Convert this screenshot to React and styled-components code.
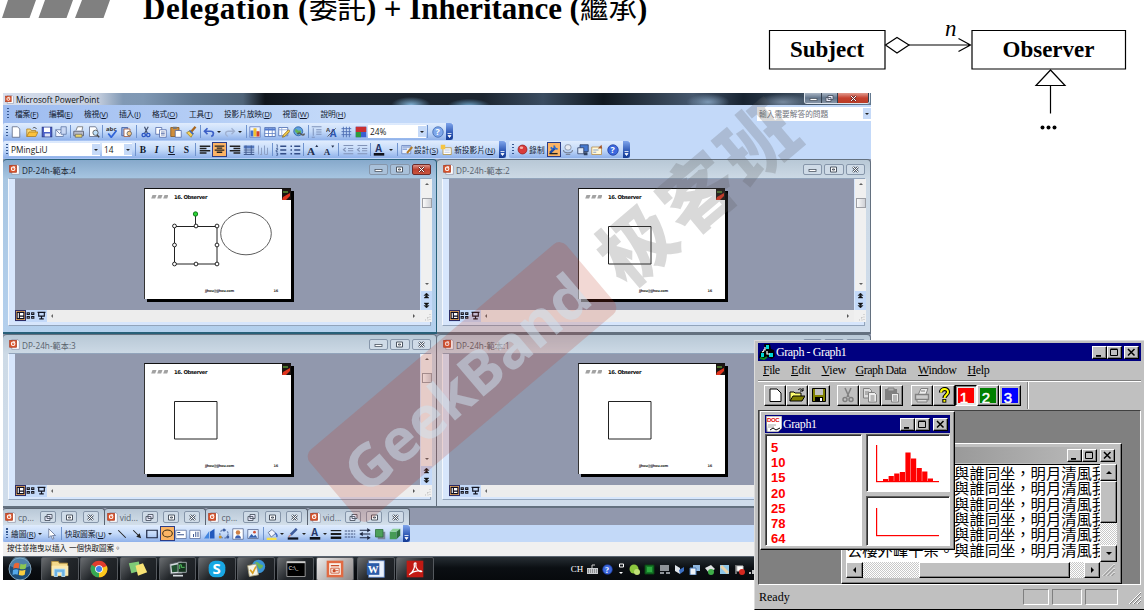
import React from "react";
import styled, { createGlobalStyle, css } from "styled-components";

const Global = createGlobalStyle`
  * { box-sizing: border-box; }
  body { margin: 0; background: #fff; }
`;

const uiFont = `"Open Sans", "Noto Sans CJK TC", sans-serif`;
const serif = `"Liberation Serif", "Noto Sans CJK TC", serif`;

/* ---------- slide ---------- */
const Page = styled.main`
  position: relative;
  width: 1144px;
  height: 616px;
  overflow: hidden;
  background: #fff;
  font-family: ${uiFont};
`;
const SlideHeader = styled.header`
  display: flex;
  align-items: flex-start;
  gap: 33px;
  height: 40px;
`;
const Title = styled.h1`
  margin: -10px 0 0;
  font: 700 31px/38px ${serif};
  letter-spacing: 0.55px;
  white-space: nowrap;
  color: #000;
`;
const Tight = styled.span`
  letter-spacing: -0.05px;
`;
const Han = styled.span`
  font-weight: 400;
  font-size: 28.5px;
  letter-spacing: 0;
`;
const Diagram = styled.svg`
  position: absolute;
  left: 760px;
  top: 10px;
`;

/* ---------- icons, 16 x 16 grid ---------- */
const glyphs = {
  ppt: <><path d="M4 1h9l2 2v12H4z" fill="#fff" stroke="#8a8fa5" /><rect x="1" y="2" width="10" height="10" fill="#d9542b" stroke="#a9351a" /><circle cx="6" cy="7" r="2.6" fill="none" stroke="#fff" strokeWidth="1.5" /><path d="M6 7V4h3" stroke="#fff" fill="none" /></>,
  page: <path d="M3 1h7l3 3v11H3z" fill="#fff" stroke="#55607c" />,
  folder: <><path d="M1 14V4h5l1 2h6v3" fill="#f9d978" stroke="#a8781b" /><path d="M1 14l3-6h12l-3 6z" fill="#fbc23b" stroke="#a8781b" /><path d="M9 3c2-2 4-1 5 1" stroke="#333" fill="none" /></>,
  save: <><rect x="1.5" y="1.5" width="13" height="13" fill="#4a5fc7" stroke="#26357f" /><rect x="4" y="2" width="8" height="6" fill="#fff" /><rect x="5" y="10" width="7" height="4" fill="#dfe5f5" /></>,
  mail: <><path d="M1 5h10v9H1z" fill="#f4f7ff" stroke="#59709f" /><path d="M1 5l5 5 5-5" stroke="#59709f" fill="none" /><path d="M8 1h7v10H8z" fill="#c9d8f5" stroke="#59709f" /></>,
  print: <><path d="M4 6l2-5h7l-1 5" fill="#fff" stroke="#666" /><path d="M1 7h13v6H1z" fill="#b8bccb" stroke="#4f5362" /><path d="M3 11h9v4H3z" fill="#e9d66b" stroke="#666" /></>,
  preview: <><path d="M2 1h8l2 3v10H2z" fill="#fff" stroke="#55607c" /><circle cx="10" cy="9" r="3.5" fill="#bfe0fa" stroke="#444" /><path d="M12 12l3 3" stroke="#444" strokeWidth="2" /></>,
  spell: <><text x="0" y="7" fontSize="8" fontWeight="700" fill="#333">abc</text><path d="M3 10l4 5 7-9" fill="none" stroke="#3064d8" strokeWidth="2.4" /></>,
  research: <><path d="M1 2h8v11H1z" fill="#8fb0e8" stroke="#3a569b" /><path d="M4 4h8v10H4z" fill="#fff" stroke="#a0522d" /><circle cx="11" cy="10" r="3" fill="#f4c886" stroke="#555" /></>,
  cut: <><path d="M6 1l4 9M11 1L6 10" stroke="#42506f" strokeWidth="1.6" fill="none" /><circle cx="5" cy="12" r="2.3" fill="none" stroke="#2d57c4" strokeWidth="1.7" /><circle cx="11" cy="12" r="2.3" fill="none" stroke="#2d57c4" strokeWidth="1.7" /></>,
  copy: <><path d="M1 2h8v9H1z" fill="#fff" stroke="#4a63a4" /><path d="M6 5h9v10H6z" fill="#fff" stroke="#4a63a4" /><path d="M8 8h5M8 10h5M8 12h5" stroke="#4a63a4" /></>,
  paste: <><path d="M1 2h11v12H1z" fill="#cf8e3c" stroke="#7f5217" /><path d="M4 1h5v3H4z" fill="#777" /><path d="M7 6h8v9H7z" fill="#fff" stroke="#4a63a4" /></>,
  brush: <><path d="M14 1L8 8" stroke="#a8651c" strokeWidth="3" /><path d="M2 9l5-3 4 4-3 5z" fill="#f3d157" stroke="#9b7b21" /><path d="M6 6l5 5" stroke="#3864c6" strokeWidth="2" /></>,
  undo: <path d="M3 7h7c5 0 5 5 1 7M6 3L2 7l4 4" fill="none" stroke="#3b5fc6" strokeWidth="2.3" />,
  redo: <path d="M13 7H6c-5 0-5 5-1 7M10 3l4 4-4 4" fill="none" stroke="#9fb0d0" strokeWidth="1.8" />,
  chart: <><path d="M1 1h14v14H1z" fill="#eef3ff" stroke="#5a76ba" /><path d="M2 6h4v8H2z" fill="#3e6fd3" /><path d="M6 3h4v11H6z" fill="#f0c22f" /><path d="M10 7h4v7h-4z" fill="#d2412c" /></>,
  table: <><path d="M1 2h14v12H1z" fill="#fff" stroke="#3f60aa" /><path d="M1 3h14v3H1z" fill="#4d77cf" /><path d="M1 10h14M6 3v11M11 3v11" stroke="#5b7cc3" /></>,
  insert: <><path d="M1 2h12v11H1z" fill="#fff" stroke="#3f60aa" /><path d="M1 5h12M5 2v11" stroke="#85a0d6" /><path d="M14 5l-7 7-1 3 3-1 7-7z" fill="#f4cd4a" stroke="#866016" /></>,
  globe: <><circle cx="7" cy="7" r="6" fill="#5ea1df" stroke="#295b9d" /><path d="M3 4c3 0 3 3 6 2s2 4-1 5-3-3-5-3z" fill="#64b354" /><path d="M6 11c2-3 4-1 5 0s4 2 4-1" stroke="#555" strokeWidth="2" fill="none" /></>,
  expand: <><path d="M1 1h13M1 15h4M3 3v10M7 5h7M7 8h7M7 11h7" stroke="#7c91ba" strokeWidth="1.300" fill="none" /></>,
  format: <><text x="0" y="8" fontSize="8" fontWeight="700" fill="#444">A</text><text x="5" y="15" fontSize="13" fontWeight="700" fill="#2f56b0">A</text><path d="M2 14L13 3" stroke="#444" /></>,
  grid: <path d="M2 3.500h13M2 7.500h13M2 11.500h13M4.500 1v14M8.500 1v14M12.500 1v14" stroke="#4f6fb4" strokeWidth="1.200" />,
  colors: <><path d="M1 1h14v14H1z" fill="#3a5fd2" /><path d="M1 1h14v7H1z" fill="#c93030" /><path d="M1 8h7v7H1z" fill="#2d9b3f" /></>,
  help: <><circle cx="8" cy="8" r="7" fill="#3c68dd" stroke="#1e3c9d" /><text x="4.500" y="12.500" fontSize="12" fontWeight="700" fill="#fff">?</text></>,
  helpSoft: <><circle cx="8" cy="8" r="7" fill="#7ea7ea" stroke="#3c66ad" /><text x="4.500" y="12.500" fontSize="12" fontWeight="700" fill="#fff">?</text></>,
  alignL: <path d="M1 3h14M1 6h9M1 9h14M1 12h9" stroke="#222" strokeWidth="1.900" />,
  alignC: <path d="M1 3h14M4 6h8M1 9h14M4 12h8" stroke="#222" strokeWidth="1.900" />,
  alignR: <path d="M1 3h14M6 6h9M1 9h14M6 12h9" stroke="#222" strokeWidth="1.900" />,
  spread: <><path d="M1 2h14v4H1z" fill="#5277be" /><path d="M1 8h14M1 11h14M1 14h14M4 2v12M11 2v12" stroke="#425a8d" strokeWidth="1.300" /></>,
  columns: <path d="M2 2v12M6 5v9M10 2v12M14 5v9M4 14h3M11 14h3" stroke="#8da0c4" strokeWidth="1.400" fill="none" />,
  numbered: <><path d="M7 3h8M7 8h8M7 13h8" stroke="#334d86" strokeWidth="1.700" /><path d="M2 1h1v4M1.500 6h2v2h-2v2h2M1.500 12h2v3h-2" stroke="#334d86" fill="none" /></>,
  bullets: <><path d="M7 3h8M7 8h8M7 13h8" stroke="#334d86" strokeWidth="1.700" /><path d="M2 2h2v2H2zM2 7h2v2H2zM2 12h2v2H2z" fill="#334d86" /></>,
  indent: <path d="M2 2h13M8 6h7M8 9h7M2 13h13M5 5L2 7.500 5 10" stroke="#8294b8" strokeWidth="1.600" fill="none" />,
  fontUp: <><text x="0" y="14" fontSize="15" fontWeight="700" fill="#22304f" fontFamily="Liberation Serif">A</text><path d="M11 4l2-3 2 3z" fill="#22304f" /></>,
  fontDown: <><text x="1" y="14" fontSize="12" fontWeight="700" fill="#22304f" fontFamily="Liberation Serif">A</text><path d="M11 2h4l-2 3z" fill="#22304f" /></>,
  fontColor: <><text x="3" y="11" fontSize="13" fontWeight="700" fill="#26386a">A</text><path d="M1 12h14v3.500H1z" fill="#10131b" /></>,
  design: <><path d="M1 2h12v11H1z" fill="#e9f1ff" stroke="#5b79b8" /><path d="M2 4h10M2 7h6" stroke="#8ea8d9" strokeWidth="2" /><path d="M15 4l-7 8" stroke="#b37b25" strokeWidth="2.600" /></>,
  newSlide: <><path d="M4 5h11v9H4z" fill="#fff" stroke="#b28c33" /><path d="M6 8h7M6 11h7" stroke="#a6b6d8" /><path d="M1 1h6v6H1z" fill="#f6c542" /></>,
  record: <><circle cx="8" cy="8" r="6.500" fill="#d93a3a" stroke="#8d1717" /><ellipse cx="6.500" cy="5.500" rx="2.500" ry="1.800" fill="#f7b0a8" /></>,
  tool: <><path d="M3 13l7-7" stroke="#1f4ea8" strokeWidth="3.600" /><path d="M9 2c0 3 2 5 5 5M4 5l3 3" stroke="#2d6bd0" strokeWidth="2.600" fill="none" /><path d="M2 14h12" stroke="#222" strokeWidth="2" /></>,
  mic: <><rect x="4" y="1" width="8" height="7" rx="3" fill="#e7ebf3" stroke="#79849a" /><path d="M2 8c0 5 12 5 12 0M5 14h6" stroke="#79849a" strokeWidth="1.500" fill="none" /></>,
  monitor: <><path d="M4 1h11v9H4z" fill="#4679d0" stroke="#24365e" /><path d="M1 5h8v8H1z" fill="#dde7f8" stroke="#24365e" /><path d="M9 11h5v4H9z" fill="#30405f" /></>,
  memo: <><path d="M1 4h13v10H1z" fill="#fff8d8" stroke="#b58a40" /><path d="M9 6l5-5 1 5z" fill="#a65a2f" /><path d="M3 8h7M3 11h4" stroke="#6486c6" /></>,
  cursor: <path d="M5 1v12l3-3 2 5 2-1-2-4h4z" fill="#fff" stroke="#5a6a8d" />,
  line: <path d="M3 3l10 10" stroke="#222" strokeWidth="1.400" />,
  arrow: <><path d="M3 3l8 8" stroke="#222" strokeWidth="1.400" /><path d="M13.500 13.500L7 11.500l4.500-4.500z" fill="#222" /></>,
  rect: <path d="M1 3h14v10H1z" fill="none" stroke="#1d2742" strokeWidth="1.600" />,
  oval: <ellipse cx="8" cy="8" rx="7" ry="5" fill="none" stroke="#3a2b10" strokeWidth="1.500" />,
  textbox: <><path d="M1 3h14v11H1z" fill="#fff" stroke="#566b9b" /><path d="M3 6h4M3 9h9" stroke="#3c558f" strokeWidth="1.500" /></>,
  vtext: <><path d="M1 3h14v11H1z" fill="#fff" stroke="#566b9b" /><path d="M12 5v7M9 5v7M6 8v4" stroke="#3c558f" strokeWidth="1.300" /></>,
  wordart: <><path d="M0 14L7 4v10z" fill="#4386e0" /><path d="M8 14V5l6-4v13z" fill="#2258bd" /></>,
  org: <><circle cx="8" cy="8" r="5.500" fill="none" stroke="#7089b8" strokeWidth="1.800" strokeDasharray="3 2" /><circle cx="8" cy="2.500" r="2" fill="#3d5d9f" /><circle cx="3" cy="12" r="2" fill="#c99532" /><circle cx="13" cy="12" r="2" fill="#3d5d9f" /></>,
  clip: <><path d="M1 1h14v14H1z" fill="#fff" stroke="#52638c" /><circle cx="8" cy="6" r="3" fill="#ce8147" /><path d="M4 14c0-6 8-6 8 0z" fill="#3b60b2" /></>,
  picture: <><path d="M1 2h14v12H1z" fill="#e4efff" stroke="#52638c" /><path d="M2 13l4-5 3 3 2-2 3 4z" fill="#335fae" /><circle cx="10" cy="5.500" r="1.800" fill="#d04e35" /></>,
  fill: <><path d="M3 6l5-4 5 5-6 5z" fill="#f1f5ff" stroke="#4d5f87" /><path d="M12 7c3 1 3 4 2 5" stroke="#3d66c0" strokeWidth="2" fill="none" /><path d="M1 13h13v3H1z" fill="#f5e04a" /></>,
  pen: <><path d="M13 1L5 9" stroke="#3e5b9c" strokeWidth="3.400" /><path d="M5 9l-3 3" stroke="#b88" strokeWidth="2" /><path d="M1 12.500h14v3H1z" fill="#0f1320" /></>,
  lines: <><path d="M1 3.500h14" stroke="#111" strokeWidth="1.500" /><path d="M1 8h14" stroke="#111" strokeWidth="2.500" /><path d="M1 13h14" stroke="#111" strokeWidth="3.200" /></>,
  dashes: <path d="M1 4h14M1 8h14M1 12h14" stroke="#43557e" strokeWidth="1.500" strokeDasharray="3 1" />,
  arrows: <><path d="M1 3h14M1 8h14M1 13h14" stroke="#1e2740" strokeWidth="1.600" /><path d="M15 3l-4-3v6zM1 8l4-3v6zM15 13l-4-3v6z" fill="#1e2740" /></>,
  shadow: <><path d="M5 5h10v10H5z" fill="#7a8699" /><path d="M2 2h10v10H2z" fill="#4da05b" stroke="#2a6a38" /></>,
  cube: <><path d="M1 5h9v10H1z" fill="#479b56" /><path d="M1 5l4-4h10l-5 4z" fill="#8cd098" /><path d="M10 5l5-4v9l-5 5z" fill="#2c6f3a" /></>,
  viewNormal: <path d="M2 2.500h12v11H2zM6 2v12M6 9h8" fill="#fff" stroke="#0d0d20" strokeWidth="2" />,
  viewSort: <path d="M2 3h4v3H2zM10 3h4v3h-4zM2 10h4v3H2zM10 10h4v3h-4z" fill="#fff" stroke="#10131f" strokeWidth="1.800" />,
  viewShow: <><path d="M1 2.500h14M3 3v6h10V3M8 9v5M4 14h8" fill="none" stroke="#10131f" strokeWidth="2" /></>,
};
const Svg = styled.svg`
  display: block;
  flex: none;
  width: ${(p) => p.$s}px;
  height: ${(p) => p.$s}px;
`;
const Icon = ({ name, size = 11 }) => (
  <Svg $s={size} viewBox="0 0 16 16">{glyphs[name]}</Svg>
);

/* ---------- PowerPoint window ---------- */
const PptWindow = styled.section`
  position: absolute;
  left: 3px;
  top: 93px;
  width: 868px;
  height: 487px;
  display: flex;
  flex-direction: column;
  overflow: hidden;
  background: #c3d9f8;
`;
const PptTitle = styled.div`
  display: flex;
  align-items: center;
  height: 12px;
  flex: none;
  padding: 0 1px 0 2px;
  gap: 2px;
  font-size: 8.300px;
  color: #111;
  background:
    radial-gradient(ellipse 22px 9px at 408px 12px, #7fb0d4, transparent 90%),
    radial-gradient(ellipse 24px 8px at 466px 13px, #6ea4ca, transparent 90%),
    radial-gradient(ellipse 24px 9px at 705px 9px, #7c98b4, transparent 90%),
    radial-gradient(ellipse 30px 9px at 780px 9px, #76899f, transparent 90%),
    linear-gradient(90deg, #d7dfee 0, #c3cddd 95px, #8199b5 120px, #7f98b4 140px, #5f7791 190px, #4f6378 240px, #0f151c 262px, #1d2630 330px, #1c2530 480px, #3a4c60 540px, #101820 600px, #46586e 690px, #172331 740px, #637990 868px);
`;
const TitleText = styled.span`flex: 1;`;
const Caption = styled.div`
  display: flex;
  align-self: flex-start;
  height: 11px;
  border: 1px solid #dbe3ec;
  border-top: 0;
  border-radius: 0 0 3px 3px;
  overflow: hidden;
`;
const CaptionButton = styled.span`
  width: ${(p) => p.$w}px;
  display: flex;
  align-items: center;
  justify-content: center;
  background: ${(p) => (p.$close ? "linear-gradient(#e19a8e, #c5412f 50%, #b93c26)" : "linear-gradient(#a9b5c4, #62758b 50%, #8795a8)")};
  border-right: 1px solid #333f4e;
`;
const MenuBar = styled.div`
  display: flex;
  align-items: center;
  flex: none;
  height: 18px;
  padding: 0 0 1px 4px;
  font-size: 7.700px;
  color: #10182c;
  background: linear-gradient(90deg, #9ebcf0, #c3d9f9 330px);
`;
const Grip = styled.span`
  flex: none;
  width: 2px;
  height: 12px;
  margin-right: ${(p) => p.$after || 1}px;
  background: repeating-linear-gradient(#35578f 0 1.500px, transparent 1.500px 3px);
`;
const MenuItem = styled.span`
  width: ${(p) => p.$w}px;
  flex: none;
  white-space: nowrap;
  letter-spacing: -0.100px;
`;
const Ask = styled.div`
  margin-left: auto;
  display: flex;
  align-items: center;
  width: 114px;
  height: 14px;
  background: #fff;
  color: #70747c;
  padding-left: 2px;
`;
const Bar = styled.div`
  display: flex;
  flex: none;
  height: ${(p) => p.$h || 18}px;
  gap: 3px;
  background: ${(p) => (p.$plain ? "#c3d9f8" : "linear-gradient(90deg, #9ebcf0, #c3d9f9 330px)")};
`;
const Strip = styled.div`
  display: flex;
  align-items: center;
  height: 17px;
  padding-left: 3px;
  border-radius: 2px 0 0 2px;
  background: linear-gradient(#e0ecfd, #c4daf9 50%, #8fb1ea);
  font-size: 7.700px;
  color: #10182c;
  white-space: nowrap;
`;
const Cell = styled.span`
  display: flex;
  align-items: center;
  justify-content: center;
  flex: none;
  width: ${(p) => p.$w}px;
  height: 15px;
  ${(p) => p.$on && css`background: #fbb465; border: 1px solid #2c3d86;`}
`;
const Rule = styled.span`
  flex: none;
  width: 1px;
  height: 13px;
  margin: 0 ${(p) => (p.$w - 1) / 2}px;
  background: #6f93ce;
`;
const Letter = styled.b`
  font: ${(p) => (p.$italic ? "italic" : "normal")} 700 9.500px/12px "Liberation Serif", serif;
  text-decoration: ${(p) => (p.$under ? "underline" : "none")};
`;
const Field = styled.span`
  display: flex;
  align-items: center;
  justify-content: space-between;
  flex: none;
  width: ${(p) => p.$w}px;
  height: 13px;
  margin-right: ${(p) => p.$after || 0}px;
  padding-left: 2px;
  background: #fff;
  font-size: 8.300px;
  color: #1a1a1a;
`;
const FieldArrow = styled.i`
  display: flex;
  align-items: center;
  justify-content: center;
  width: 8px;
  height: 11px;
  margin-left: auto;
  background: #c6daf8;
`;
const Triangle = styled.i`
  display: block;
  flex: none;
  border: 2px solid transparent;
  ${(p) => ({ down: "border-top-color: #222; margin-top: 2px;", up: "border-bottom-color: #222; margin-bottom: 2px;", left: "border-right-color: #666;", right: "border-left-color: #555; margin-left: auto; margin-right: 3px;" }[p.$to])}
`;
const CapShape = styled.span`
  display: flex;
  align-items: flex-end;
  justify-content: center;
  flex: none;
  width: 7px;
  height: 17px;
  padding-bottom: 2px;
  margin-left: ${(p) => p.$before || 0}px;
  border-radius: 0 3px 3px 0;
  background: linear-gradient(#7fa5ec, #2d57b4 60%, #143a93);
`;
const Cap = ({ before }) => (
  <CapShape $before={before}>
    <svg width="5" height="5" viewBox="0 0 5 5"><path d="M.5 .5h4M1 2.500h3L2.500 4.500z" stroke="#fff" strokeWidth=".8" fill="#fff" /></svg>
  </CapShape>
);

const Tools = ({ items }) =>
  items.map((it, i) => {
    const [kind, w, on] = it;
    if (kind === "|") return <Rule key={i} $w={w} />;
    if (kind === "v") return <Cell key={i} $w={w}><Triangle $to="down" /></Cell>;
    return <Cell key={i} $w={w} $on={on}><Icon name={kind} size={on ? 11 : 12} /></Cell>;
  });

const standardTools = [
  ["page", 14], ["folder", 17], ["save", 13], ["mail", 16], ["|", 2], ["print", 16], ["preview", 14], ["|", 2],
  ["spell", 17], ["research", 14], ["|", 4], ["cut", 15], ["copy", 15], ["paste", 15], ["brush", 16], ["|", 3],
  ["undo", 13], ["v", 8], ["redo", 13], ["v", 8], ["|", 4], ["chart", 14], ["table", 15], ["insert", 14], ["globe", 16],
  ["|", 2], ["expand", 16], ["format", 14], ["grid", 14], ["colors", 15],
];
const menus = [["檔案", "F", 34], ["編輯", "E", 35], ["檢視", "V", 35], ["插入", "I", 33], ["格式", "O", 37], ["工具", "T", 35], ["投影片放映", "D", 58.500], ["視窗", "W", 38], ["說明", "H", 40]];

/* ---------- document windows ---------- */
const Mdi = styled.div`
  display: grid;
  grid-template-columns: 434px 434px;
  grid-template-rows: 175px 174px;
  flex: none;
  height: 349px;
  background: #9198ad;
`;
const Doc = styled.article`
  display: flex;
  flex-direction: column;
  padding: 0 5px 6px;
  border: 1px solid ${(p) => (p.$active ? "#286079" : "#63707f")};
  border-width: 1px 1px 2px 0;
  border-radius: 4px 4px 0 0;
  background: ${(p) => (p.$active ? "linear-gradient(#86a9cb, #a8c6e2 19px, #b4d0ed)" : "linear-gradient(#b8c8d6, #cddae6 19px, #cfdceb)")};
`;
const DocTitle = styled.div`
  display: flex;
  align-items: center;
  gap: 2px;
  height: 18px;
  flex: none;
  padding: 1px 0 0 1px;
  font-size: 8.200px;
  color: ${(p) => (p.$active ? "#1d2733" : "#59626d")};
`;
const DocButtons = styled.div`
  display: flex;
  gap: 2px;
  margin-left: auto;
`;
const DocButton = styled.span`
  display: flex;
  align-items: center;
  justify-content: center;
  width: ${(p) => p.$w || 19.500}px;
  height: ${(p) => p.$h || 11}px;
  border: 1px solid ${(p) => (p.$red ? "#6c2b2b" : "#8696aa")};
  border-radius: 2px;
  background: ${(p) => (p.$red ? "linear-gradient(#dc9288, #bf4130 50%, #c9543e)" : p.$active ? "#a9c1da" : "#cfdbe7")};
`;
const Mark = ({ kind, color = "#4d5663" }) => (
  <svg width="9" height="7" viewBox="0 0 9 7">
    {kind === "min" && <rect x="1" y="3.500" width="7" height="2" fill="#fff" stroke={color} strokeWidth=".8" />}
    {kind === "max" && <path d="M1.500 1h6v5h-6zM3.500 3h2v1h-2z" fill="#fff" stroke={color} />}
    {kind === "restore" && <path d="M3 .5h5v4H3zM1 2.500h5v4H1z" fill="#eef" stroke={color} strokeWidth=".9" />}
    {kind === "x" && <><path d="M2 1l5 5M7 1L2 6" stroke={color} strokeWidth="2.400" /><path d="M2 1l5 5M7 1L2 6" stroke="#fff" strokeWidth="1" /></>}
  </svg>
);
const Frame = styled.div`
  flex: 1;
  display: grid;
  grid-template-columns: 405px 12px;
  grid-template-rows: 131px 12px;
  padding-left: 6px;
  border: 1px solid #92a4bb;
  border-left-color: #f4f8fd;
  background: linear-gradient(#d7e6fc 0 146px, #7fa5e6 146px 147px, #dce8f8 147px);
`;
const Workspace = styled.div`
  padding: 9px 0 0 129px;
  background: #9198ad;
`;
const Slide = styled.div`
  display: flex;
  flex-direction: column;
  width: 147px;
  height: 111px;
  background: #fff;
  border-top: 1px solid #111;
  border-left: 1px solid #333;
  box-shadow: 3px 3px 0 #000;
`;
const MiniHead = styled.div`
  display: flex;
  justify-content: space-between;
  height: 16px;
  padding-left: 6px;
  font: 700 5.300px/17px "DejaVu Sans", sans-serif;
  letter-spacing: -0.450px;
  color: #111;
  gap: 6px;
`;
const MiniTitle = styled.span`flex: 1;`;
const MiniFoot = styled.div`
  display: flex;
  justify-content: space-between;
  padding: 0 13px 0 60px;
  font: 700 3.600px/5px "DejaVu Sans", sans-serif;
  letter-spacing: -0.300px;
  color: #333;
`;
const VScroll = styled.div`
  display: flex;
  flex-direction: column;
  align-items: center;
  margin-left: 1px;
  background: #f0f0f0;
`;
const VArrow = styled.span`height: ${(p) => p.$h}px; display: flex; align-items: center; opacity: .7;`;
const VThumb = styled.span`
  width: 10px;
  height: 10px;
  border: 1px solid #9d9fa5;
  background: linear-gradient(90deg, #fafafa, #cfd1d6);
`;
const Jump = styled.span`
  margin-top: auto;
  width: 11px;
  height: 19px;
  background: #c3d9f9;
`;
const ViewBar = styled.div`
  display: flex;
  align-items: center;
  background: #ededed;
`;
const Views = styled.span`
  display: flex;
  background: #c3d9f9;
  height: 12px;
  margin-right: 2px;
`;
const ViewButton = styled.span`
  display: flex;
  align-items: center;
  justify-content: center;
  width: 10.500px;
  height: 11px;
  ${(p) => p.$on && css`background: #fbb465; border: 1px solid #2c2d66;`}
`;

const Handles = () => (
  <g fill="#fff" stroke="#111" strokeWidth=".9">
    <path d="M50.500 11v9" />
    <circle cx="50.500" cy="9" r="2.200" fill="#2bd335" stroke="#0b6f17" />
    {[[29.500, 21], [51, 21], [72, 21], [29.500, 40], [72, 40], [29.500, 59], [51, 59], [72, 59]].map(([x, y]) => (
      <circle key={`${x}-${y}`} cx={x} cy={y} r="1.900" />
    ))}
  </g>
);

const DocumentWindow = ({ name, active }) => (
  <Doc $active={active}>
    <DocTitle $active={active}>
      <Icon name="ppt" size={11} />
      {name}
      <DocButtons>
        <DocButton $active={active}><Mark kind="min" /></DocButton>
        <DocButton $active={active}><Mark kind="max" /></DocButton>
        <DocButton $red={active}><Mark kind="x" color={active ? "#6c2b2b" : undefined} /></DocButton>
      </DocButtons>
    </DocTitle>
    <Frame>
      <Workspace>
        <Slide>
          <MiniHead>
            <svg width="17" height="16"><path d="M1.500 6h4l-1.300 3.500h-4zM7.500 6h4l-1.300 3.500h-4zM13.500 6h4l-1.300 3.500h-4z" fill="#a2a2a2" /></svg>
            <MiniTitle>16. Observer</MiniTitle>
            <svg width="9" height="11"><path d="M0 0h9v11H0z" fill="#1c1512" /><path d="M1 8l7-4v3L4 11H0z" fill="#e0341d" /><path d="M1 2h5v2H1z" fill="#48702a" /></svg>
          </MiniHead>
          <svg width="146" height="84">
            <path d="M29.500 21.500h42.500v37.500h-42.500z" fill="none" stroke="#222" />
            {active && <ellipse cx="101" cy="28.500" rx="25.300" ry="21.300" fill="none" stroke="#333" strokeWidth=".8" />}
            {active && <Handles />}
          </svg>
          <MiniFoot><span>jjhou@jjhou.com</span><span>16</span></MiniFoot>
        </Slide>
      </Workspace>
      <VScroll>
        <VArrow $h={10}><Triangle $to="up" /></VArrow>
        <VArrow $h={9} />
        <VThumb />
        <VArrow $h={72} />
        <VArrow $h={8}><Triangle $to="down" /></VArrow>
        <Jump>
          <svg width="11" height="19"><path d="M5.500 2l2.500 2.500H3zM5.500 4.500L8 7H3zM3 12h5l-2.500 2.500zM3 14.500h5L5.500 17z" fill="#111" stroke="#111" strokeWidth=".4" /></svg>
        </Jump>
      </VScroll>
      <ViewBar>
        <Views>
          <ViewButton $on><Icon name="viewNormal" size={9} /></ViewButton>
          <ViewButton><Icon name="viewSort" size={9} /></ViewButton>
          <ViewButton><Icon name="viewShow" size={9} /></ViewButton>
        </Views>
        <Triangle $to="left" />
        <Triangle $to="right" />
      </ViewBar>
      <svg width="12" height="12"><path d="M0 0h12v12H0z" fill="#f0f0f0" /><path d="M10 4v6H4" stroke="#bbb" strokeDasharray="1 1.500" fill="none" /><path d="M8 7v1H7" stroke="#bbb" fill="none" /></svg>
    </Frame>
  </Doc>
);

const TabRow = styled.div`
  display: flex;
  flex: none;
  height: 17px;
  background: #9198ad;
`;
const Tab = styled.div`
  display: flex;
  align-items: center;
  width: 101.700px;
  padding: 0 5px 0 2px;
  gap: 2px;
  border: 1px solid #5a6472;
  border-width: 1px 1px 0 0;
  border-radius: 3px 3px 0 0;
  background: linear-gradient(#b9c8d7, #d3dfea);
  font-size: 8.500px;
  color: #5b6470;
`;
const TabName = styled.span`width: 20px; flex: none; white-space: nowrap;`;
const TabButtons = styled.span`
  display: flex;
  flex: 1;
  justify-content: space-between;
`;
const StatusBar = styled.div`
  flex: none;
  height: 14px;
  padding-left: 4px;
  font: 7.500px/13px ${uiFont};
  color: #111;
  background: #f0f0f0;
`;
const Taskbar = styled.div`
  display: flex;
  align-items: center;
  flex: none;
  height: 25px;
  padding-left: 5px;
  border-top: 1px solid #5a6470;
  background: linear-gradient(#272e34, #0b0f13 45%, #07090c);
`;
const TaskButton = styled.span`
  display: flex;
  align-items: center;
  justify-content: center;
  width: 37.500px;
  height: 24px;
  margin-right: ${(p) => p.$after || 1.800}px;
  border: 1px solid #55595e;
  border-radius: 2px;
  background: ${(p) => (p.$on ? "linear-gradient(135deg, #eceaea, #8a8686)" : "linear-gradient(135deg, #6a6d70, #23272b 50%, #1a1d21)")};
`;
const Tray = styled.div`
  display: flex;
  align-items: center;
  margin-left: 135px;
  gap: 4px;
  color: #fff;
  font: 9px/12px ${serif};
`;
const taskIcons = {
  explorer: <><path d="M2 3h8l1 2h10v15H2z" fill="#f3d88a" stroke="#bb9640" /><path d="M2 8h20v12H2z" fill="#fbe9ae" /><path d="M5 12h13v9h-4v-5H9v5H5z" fill="#6db4e4" stroke="#c2e3f7" /></>,
  chrome: <><circle cx="12" cy="12" r="10" fill="#e23d2d" /><path d="M12 12L3.300 7A10 10 0 0 0 12 22z" fill="#35a853" /><path d="M12 12l0 10A10 10 0 0 0 21.500 8.500z" fill="#fbc81c" /><circle cx="12" cy="12" r="4.600" fill="#fff" /><circle cx="12" cy="12" r="3.600" fill="#3f7ee8" /></>,
  notes: <><path d="M1 5l12-2 2 11-11 3z" fill="#7fca77" /><path d="M9 8l9-3 5 11-11 4z" fill="#f7e275" /></>,
  remote: <><path d="M2 6l14-3 1 14-14 1z" fill="#d6dce0" stroke="#50575d" /><path d="M4 8l10-2 1 9-10 1z" fill="#214f31" /><path d="M12 4h10v12H12z" fill="#15331f" stroke="#b5bcc0" /><path d="M14 12V7h2v3h4" stroke="#5edb6a" fill="none" /><path d="M6 19h12v2H6z" fill="#d6dce0" /></>,
  skype: <><rect x="2" y="2" width="20" height="20" rx="8" fill="#18a7e3" /><text x="6.500" y="18.500" fontSize="18" fontWeight="700" fill="#fff">S</text></>,
  outlook: <><circle cx="15" cy="9" r="8" fill="#3a93d5" /><path d="M11 4c4-2 5 3 8 3s1 5-3 5z" fill="#69b659" /><path d="M2 8l10-2 3 13-11 2z" fill="#f4f4e7" stroke="#a89e77" /><path d="M5 13l3 4 4-8" fill="none" stroke="#d89e20" strokeWidth="2" /></>,
  cmd: <><path d="M1 3h22v18H1z" fill="#000" stroke="#aaa" /><path d="M1 3h22v2H1z" fill="#ccc" /><text x="3" y="13" fontSize="7" fill="#fff">C:\_</text></>,
  powerpoint: <><path d="M2 2h20v20H2z" fill="#e16a42" /><path d="M5 5h14v14H5z" fill="#fbf1e9" /><path d="M7 8h10" stroke="#c84a26" strokeWidth="1.500" /><path d="M7 11h10v6H7z" fill="none" stroke="#c84a26" strokeWidth="1" /><circle cx="11" cy="14" r="2" fill="#c84a26" /><path d="M13 14h3" stroke="#c84a26" /></>,
  word: <><path d="M3 2h19v20H3z" fill="#eaf1fb" stroke="#4d72b2" /><path d="M1 5h15v14H1z" fill="#2c5ca9" /><text x="2" y="17" fontSize="13" fontWeight="700" fill="#fff" fontFamily="Liberation Serif">W</text></>,
  acrobat: <><path d="M2 2h20v20H2z" fill="#c11a13" /><path d="M5 19c5-4 7-9 6-13 0-2 3-2 2 0-1 5 4 10 7 9 1-1-9-2-14 3" fill="none" stroke="#fff" strokeWidth="1.500" /></>,
};
const TaskIcon = ({ name }) => <Svg $s={20} viewBox="0 0 24 24">{taskIcons[name]}</Svg>;
const Orb = () => (
  <svg width="33" height="24" viewBox="0 0 33 24">
    <circle cx="12" cy="12" r="11" fill="#1c4d78" stroke="#86a7bd" />
    <path d="M2 9a10 10 0 0 1 20 0q-10 5-20 0" fill="#6fa5c8" opacity=".6" />
    <path d="M6 7q3-2 5.500-.5l-.8 5q-3-1.200-5.500.3z" fill="#ea6636" />
    <path d="M12.500 6.800q3 1.300 6-.3l-.8 5q-3 1.500-6 .4z" fill="#8cc751" />
    <path d="M5 13q3-1.500 5.500-.3l-.8 5q-2.500-1-5.200.2z" fill="#54a9ea" />
    <path d="M11.500 13q3 1.200 6-.3l-.8 5q-3 1.500-6 .4z" fill="#fbce3f" />
  </svg>
);

/* ---------- watermark ---------- */
const Watermark = styled.div`
  position: absolute;
  left: 462px;
  top: 382px;
  display: flex;
  align-items: center;
  height: 0;
  transform-origin: 0 0;
  transform: rotate(-40.200deg);
  pointer-events: none;
`;
const MarkBadge = styled.span`
  display: flex;
  align-items: center;
  justify-content: center;
  flex: none;
  width: 336px;
  height: 92px;
  margin-left: -168px;
  padding: 4px 0 0 6px;
  border-radius: 9px;
  background: rgba(190, 60, 40, 0.2);
  color: rgba(205, 228, 242, 0.5);
  font: 700 59px/80px "Open Sans", sans-serif;
`;
const MarkHan = styled.span`
  margin: 8px 0 0 17px;
  font: 900 75px/92px "Noto Sans CJK SC", sans-serif;
  letter-spacing: 4px;
  color: rgba(90, 90, 90, 0.23);
  white-space: nowrap;
`;

/* ---------- classic Graph window ---------- */
const raised = css`
  border: 1px solid;
  border-color: #fff #000 #000 #fff;
  box-shadow: inset -1px -1px 0 #808080;
`;
const sunken = css`
  border: 1px solid;
  border-color: #606060 #fff #fff #606060;
`;
const GraphWindow = styled.section`
  position: absolute;
  left: 754px;
  top: 340px;
  width: 391px;
  height: 270px;
  display: flex;
  flex-direction: column;
  padding: 2px 3px;
  background: #c0c0c0;
  border: 1px solid;
  border-color: #dcdcdc #555 #000 #dcdcdc;
  font: 12px/14px "Liberation Serif", serif;
  color: #000;
`;
const NavyBar = styled.div`
  display: flex;
  align-items: center;
  flex: none;
  height: ${(p) => p.$h || 18}px;
  padding: 0 2px 0 1px;
  gap: 1px;
  background: ${(p) => (p.$idle ? "linear-gradient(90deg, #808080, #c0c0c0)" : "#000080")};
  color: #fff;
  letter-spacing: -0.400px;
`;
const BarButtons = styled.span`
  display: flex;
  margin-left: auto;
  & > :last-child { margin-left: ${(p) => p.$gap || 2}px; }
`;
const BarButton = styled.span`
  ${raised}
  display: flex;
  align-items: center;
  justify-content: center;
  width: 15px;
  height: 13px;
  background: #c0c0c0;
`;
const ClassicMark = ({ kind }) => (
  <svg width="9" height="9" viewBox="0 0 9 9">
    {kind === "min" && <path d="M1 7h5v1.800H1z" fill="#000" />}
    {kind === "max" && <path d="M.5 1.500h7v6h-7zM.5 1h7" fill="none" stroke="#000" />}
    {kind === "x" && <path d="M1 1l6.500 6.500M7.500 1L1 7.500" stroke="#000" strokeWidth="1.500" />}
  </svg>
);
const ClassicButtons = ({ gap }) => (
  <BarButtons $gap={gap}>
    {["min", "max", "x"].map((k) => <BarButton key={k}><ClassicMark kind={k} /></BarButton>)}
  </BarButtons>
);
const GraphMenu = styled.div`
  display: flex;
  align-items: center;
  flex: none;
  height: 20px;
  padding: 0 0 1px 5px;
  border-bottom: 1px solid #808080;
  box-shadow: 0 1px 0 #fff;
`;
const GraphMenuItem = styled.span`
  width: ${(p) => p.$w}px;
  flex: none;
  white-space: nowrap;
  letter-spacing: ${(p) => p.$ls || 0}px;
  &::first-letter { text-decoration: underline; }
`;
const GraphTools = styled.div`
  display: flex;
  align-items: center;
  flex: none;
  height: 28px;
  padding: 0 0 0 5.500px;
  gap: 7.500px;
`;
const ToolGroup = styled.div`
  display: flex;
  ${(p) => p.$last && css`height: 27px; padding-right: 6px; border-right: 1px solid #808080; box-shadow: 1px 0 0 #fff; align-items: center;`}
`;
const Tool = styled.span`
  ${raised}
  display: flex;
  align-items: center;
  justify-content: center;
  width: 22px;
  height: 21px;
  ${(p) => p.$down && css`border-color: #000 #fff #fff #000; box-shadow: inset 1px 1px 0 #808080; background: #e8e8e8;`}
`;
const Digit = styled.b`
  width: 16px;
  height: 15px;
  padding-right: 3px;
  background: ${(p) => p.$c};
  color: #fff;
  text-align: center;
  overflow: hidden;
  font: 400 15px/19px "Liberation Sans", sans-serif;
  -webkit-text-stroke: 0.5px #fff;
`;
const grey = "#808080";
const classic = {
  new: <path d="M3 2h7l4 4v8.500H3z" fill="#fff" stroke="#000" />,
  open: <><path d="M1 14V5h4l1 1h6v3" fill="#ffff70" stroke="#000" /><path d="M1 14l3-5h12l-3 5z" fill="#808000" stroke="#000" /><path d="M9 3c2-2 4-1 5 1M14 1v3h-3" fill="none" stroke="#000" /></>,
  save: <><path d="M1.500 1.500h13v13h-13z" fill="#808000" stroke="#000" /><path d="M4 2h8v6H4z" fill="#c0c0c0" /><path d="M4 10h8v4.500H4z" fill="#000" /><path d="M9 11h2v3H9z" fill="#fff" /></>,
  cut: <><path d="M5 1l4 9M11 1L7 10" stroke={grey} strokeWidth="1.500" /><circle cx="5" cy="12.500" r="2" fill="none" stroke={grey} strokeWidth="1.500" /><circle cx="11" cy="12.500" r="2" fill="none" stroke={grey} strokeWidth="1.500" /></>,
  copy: <><path d="M1.500 1.500h6l2 2V11h-8zM3 5h4M3 7h4" fill="#ddd" stroke={grey} /><path d="M6.500 5.500h6l2 2V15h-8zM8.500 9h4M8.500 11h4M8.500 13h4" fill="#eee" stroke={grey} /></>,
  paste: <><path d="M1 2h12v11H1z" fill={grey} /><path d="M4 1h6v3H4z" fill="#b0b0b0" stroke={grey} /><path d="M7.500 6.500h7V15h-7zM9 9h4M9 11h4M9 13h4" fill="#eee" stroke={grey} /></>,
  print: <><path d="M4.500 7L7 1.500h7L12 7" fill="#eee" stroke={grey} /><path d="M1.500 7.500h13v5h-13z" fill="#ccc" stroke={grey} strokeWidth="1.400" /><path d="M3 12.500h10V15H3zM7 4h4" fill="#ddd" stroke={grey} /></>,
  help: <><path d="M5 5.500C5 1 12 1 12 5c0 3-3.500 3-3.500 6" fill="none" stroke="#000" strokeWidth="4.200" /><path d="M6.300 12h4v3.600h-4z" fill="#000" /><path d="M5 5.500C5 1 12 1 12 5c0 3-3.500 3-3.500 6" fill="none" stroke="#ffff00" strokeWidth="2" /><path d="M7.400 12.800h2v2h-2z" fill="#ffff00" /></>,
  mfc: <><path d="M0 0h16v16H0z" fill="#000080" /><path d="M5 0h6l1 5 3 1 1 6-3 3-5-2-4 3-4-2 1-6 5-3z" fill="#000" /><path d="M7 1h3v4H7zM2 9h3v4H2zM10 9h4v4h-4z" fill="#00d5d5" /><path d="M6 3v3H4M8 7v3h3M5 7l-2 1" stroke="#fff" strokeWidth="1.200" fill="none" /><path d="M1 14l4 1 3-2" stroke="#0a8a20" strokeWidth="2" fill="none" /></>,
  doc: <><path d="M0 0h16v12l-4 4H1z" fill="#fff" stroke="#808080" /><text x="1" y="6" fontSize="6" fontWeight="700" fill="#e00000" fontFamily="Liberation Sans">DOC</text><path d="M2 9h8M2 11h6" stroke="#aaa" /><path d="M4 14l3-2 3 2 4-2" stroke="#000" fill="none" /></>,
};
const Classic = ({ name, size = 16 }) => <Svg $s={size} viewBox="0 0 16 16">{classic[name]}</Svg>;

const Client = styled.div`
  position: relative;
  flex: 1;
  margin: 1px 0 2px;
  border: 1px solid;
  border-color: #404040 #fff #fff #404040;
  background: #808080;
  overflow: hidden;
`;
const InnerWindow = styled.div`
  ${raised}
  position: absolute;
  left: ${(p) => p.$x}px;
  top: ${(p) => p.$y}px;
  width: ${(p) => p.$w}px;
  height: ${(p) => p.$h}px;
  display: flex;
  flex-direction: column;
  padding: 3px 4px 4px;
  background: #c0c0c0;
`;
const Panes = styled.div`
  flex: 1;
  display: grid;
  grid-template-columns: 97px 84px;
  grid-template-rows: 58px 50px;
  gap: 4px;
  padding-top: 1px;
`;
const Pane = styled.div`
  ${sunken}
  box-shadow: inset 1px 1px 0 #303030;
  background: #fff;
  overflow: hidden;
  ${(p) => p.$tall && css`grid-row: span 2;`}
`;
const Numbers = styled.div`
  padding: 5px 0 0 5px;
  font: 700 13px/15.200px "Liberation Sans", sans-serif;
  color: #f00;
`;
const TextFrame = styled.div`
  flex: 1;
  display: grid;
  grid-template-columns: 254px 17px;
  grid-template-rows: 98px 16px;
  padding-top: 1px;
`;
const Poem = styled.div`
  padding: 0 0 0 1px;
  background: #fff;
  overflow: hidden;
  border-top: 1px solid #000;
  font: 400 15.300px/15.350px "Noto Sans CJK TC", sans-serif;
  white-space: nowrap;
`;
const Verse = styled.div`
  height: 15.350px;
  padding-left: ${(p) => (p.$indent ? 107.100 : 0)}px;
`;
const dither = css`background: repeating-conic-gradient(#fff 0 25%, #c8c8c8 0 50%) 0 0 / 2px 2px;`;
const ClassicV = styled.div`${dither} display: flex; flex-direction: column;`;
const ClassicH = styled.div`${dither} display: flex;`;
const ScrollPart = styled.span`
  ${raised}
  display: flex;
  align-items: center;
  justify-content: center;
  flex: none;
  width: ${(p) => p.$w}px;
  height: ${(p) => p.$h}px;
  margin: ${(p) => p.$m || "0"};
  background: #c0c0c0;
`;
const ScrollArrow = styled.i`
  border: 3px solid transparent;
  ${(p) => ({ down: "border-top-color: #000; margin-top: 3px;", up: "border-bottom-color: #000; margin-bottom: 3px;", left: "border-right-color: #000; margin-right: 3px;", right: "border-left-color: #000; margin-left: 3px;" }[p.$to])}
`;
const GraphStatus = styled.div`
  display: flex;
  align-items: center;
  flex: none;
  height: 20px;
  padding-left: 1px;
  gap: 3px;
`;
const Ready = styled.span`flex: 1; padding-bottom: 1px;`;
const Well = styled.span`${sunken} border-color: #808080 #fff #fff #808080; width: ${(p) => p.$w}px; height: 16px;`;
const Resize = ({ w = 12 }) => (
  <svg width={w} height="14" viewBox="0 0 12 14"><path d="M0 14L12 2M4 14l8-8M8 14l4-4" stroke="#fff" /><path d="M1 14L12 3M5 14l7-7M9 14l3-3" stroke="#808080" /></svg>
);

const bars = [3, 6, 8.500, 10, 29.500, 23.500, 14, 10.500, 3.500];

const GraphApp = () => (
  <GraphWindow>
    <NavyBar>
      <Classic name="mfc" />Graph - Graph1<ClassicButtons />
    </NavyBar>
    <GraphMenu>
      <GraphMenuItem $w={28} $ls={-0.500}>File</GraphMenuItem>
      <GraphMenuItem $w={30.500} $ls={-0.100}>Edit</GraphMenuItem>
      <GraphMenuItem $w={34} $ls={-0.200}>View</GraphMenuItem>
      <GraphMenuItem $w={62.500} $ls={-0.500}>Graph Data</GraphMenuItem>
      <GraphMenuItem $w={49.500} $ls={-0.400}>Window</GraphMenuItem>
      <GraphMenuItem $w={40} $ls={-0.400}>Help</GraphMenuItem>
    </GraphMenu>
    <GraphTools>
      <ToolGroup>{["new", "open", "save"].map((n) => <Tool key={n}><Classic name={n} /></Tool>)}</ToolGroup>
      <ToolGroup>{["cut", "copy", "paste"].map((n) => <Tool key={n}><Classic name={n} /></Tool>)}</ToolGroup>
      <ToolGroup $last>
        <Tool><Classic name="print" /></Tool>
        <Tool><Classic name="help" /></Tool>
        <Tool $down><Digit $c="#f00">1</Digit></Tool>
        <Tool><Digit $c="#008000">2</Digit></Tool>
        <Tool><Digit $c="#00f">3</Digit></Tool>
      </ToolGroup>
    </GraphTools>
    <Client>
      <InnerWindow $x={82} $y={32} $w={281} $h={141}>
        <NavyBar $idle $h={16}><ClassicButtons gap={3} /></NavyBar>
        <TextFrame>
          <Poem>
            {Array.from({ length: 5 }, (_, i) => <Verse key={i} $indent>與誰同坐，明月清風我</Verse>)}
            <Verse>公樓外峰千朵。與誰同坐，明月清風我</Verse>
          </Poem>
          <ClassicV>
            <ScrollPart $w={17} $h={17}><ScrollArrow $to="up" /></ScrollPart>
            <ScrollPart $w={17} $h={42} />
            <ScrollPart $w={17} $h={17} $m="auto 0 0"><ScrollArrow $to="down" /></ScrollPart>
          </ClassicV>
          <ClassicH>
            <ScrollPart $w={17} $h={16}><ScrollArrow $to="left" /></ScrollPart>
            <ScrollPart $w={151} $h={16} $m="0 0 0 56px" />
            <ScrollPart $w={16} $h={16} $m="0 0 0 auto"><ScrollArrow $to="right" /></ScrollPart>
          </ClassicH>
          <Resize w={17} />
        </TextFrame>
      </InnerWindow>
      <InnerWindow $x={1} $y={0} $w={195} $h={139}>
        <NavyBar $h={18}><Classic name="doc" />Graph1<ClassicButtons gap={3} /></NavyBar>
        <Panes>
          <Pane $tall>
            <Numbers>{[5, 10, 15, 20, 25, 78, 64].map((n) => <div key={n}>{n}</div>)}</Numbers>
          </Pane>
          <Pane>
            <svg width="82" height="56" fill="#f00">
              <rect x="9" y="10" width="1.200" height="37" /><rect x="9" y="46" width="63" height="1.200" />
              {bars.map((h, i) => <rect key={i} x={16 + i * 5.600} y={47 - h} width="5.200" height={h} />)}
            </svg>
          </Pane>
          <Pane>
            <svg width="82" height="48" fill="#f00">
              <rect x="9" y="11" width="1.200" height="28" /><rect x="9" y="38" width="63" height="1.200" />
            </svg>
          </Pane>
        </Panes>
      </InnerWindow>
    </Client>
    <GraphStatus>
      <Ready>Ready</Ready>
      <Well $w={26} /><Well $w={30} /><Well $w={33} />
      <svg width="5" height="1" />
      <Resize />
    </GraphStatus>
  </GraphWindow>
);

export default function App() {
  return (
    <Page>
      <Global />
      <SlideHeader>
        <svg width="110" height="18"><path d="M8 0h28l-6.500 18H2zM45 0h28l-6.500 18H38.500zM82 0h28l-6.500 18H75z" fill="#808080" /></svg>
        <Title>Delegation (<Han>委託</Han><Tight>) + Inheritance (</Tight><Han>繼承</Han>)</Title>
      </SlideHeader>

      <Diagram width="384" height="130" fontFamily="Liberation Serif, serif">
        <g fill="#fff" stroke="#000" strokeWidth="1.200">
          <path d="M9.500 20.500h115.500v38.500H9.500zM212 20.500h153.500v38.500H212z" />
          <path d="M125.500 35l11.500-7.500L149 35l-12 8z" />
          <path d="M149 35h61M198.500 28.500L210.500 35l-12 6.500" fill="none" />
          <path d="M290.500 60l-14.500 15.500h29z" />
          <path d="M290.500 75.500v28" />
        </g>
        <text x="67" y="47" fontSize="23" fontWeight="700" textAnchor="middle">Subject</text>
        <text x="288.500" y="47" fontSize="23" fontWeight="700" textAnchor="middle">Observer</text>
        <text x="185" y="26" fontSize="23" fontStyle="italic">n</text>
        <circle cx="282.500" cy="117.500" r="2" /><circle cx="288.500" cy="117.500" r="2" /><circle cx="294.500" cy="117.500" r="2" />
      </Diagram>

      <PptWindow>
        <PptTitle>
          <Icon name="ppt" size={9} />
          <TitleText>Microsoft PowerPoint</TitleText>
          <Caption>
            <CaptionButton $w={17}><Mark kind="min" /></CaptionButton>
            <CaptionButton $w={16}><Mark kind="restore" /></CaptionButton>
            <CaptionButton $w={31} $close><Mark kind="x" color="#6c2b2b" /></CaptionButton>
          </Caption>
        </PptTitle>
        <MenuBar>
          <Grip $after={6} />
          {menus.map(([t, k, w]) => <MenuItem key={k} $w={w}>{t}(<u>{k}</u>)</MenuItem>)}
          <Ask>輸入需要解答的問題<FieldArrow><Triangle $to="down" /></FieldArrow></Ask>
        </MenuBar>
        <Bar>
          <Strip>
            <Grip />
            <Tools items={standardTools} />
            <Field $w={58}>24%<FieldArrow><Triangle $to="down" /></FieldArrow></Field>
            <Tools items={[["|", 3], ["helpSoft", 17]]} />
            <Cap />
          </Strip>
        </Bar>
        <Bar>
          <Strip>
            <Grip />
            <Field $w={91} $after={2}>PMingLiU<FieldArrow><Triangle $to="down" /></FieldArrow></Field>
            <Field $w={30} $after={2}>14<FieldArrow><Triangle $to="down" /></FieldArrow></Field>
            <Rule $w={3} />
            <Cell $w={12}><Letter>B</Letter></Cell>
            <Cell $w={15}><Letter $italic>I</Letter></Cell>
            <Cell $w={15}><Letter $under>U</Letter></Cell>
            <Cell $w={15}><Letter>S</Letter></Cell>
            <Tools items={[["|", 3], ["alignL", 15], ["alignC", 15, true], ["alignR", 15], ["spread", 14], ["columns", 14], ["|", 4], ["numbered", 14], ["bullets", 14], ["|", 3], ["fontUp", 16], ["fontDown", 15], ["|", 4], ["indent", 15], ["indent", 14], ["|", 3], ["fontColor", 14], ["v", 9], ["|", 5], ["design", 14]]} />
            設計(<u>S</u>)
            <Cell $w={16}><Icon name="newSlide" size={12} /></Cell>
            新投影片(<u>N</u>)
            <Cap before={4} />
          </Strip>
          <Strip>
            <Grip />
            <Cell $w={14}><Icon name="record" /></Cell>
            錄制
            <svg width="2" height="1" />
            <Tools items={[["tool", 14, true], ["mic", 15], ["monitor", 14], ["memo", 15], ["help", 16]]} />
            <Cap before={2} />
          </Strip>
        </Bar>

        <Mdi>
          <DocumentWindow name="DP-24h-範本:4" active />
          <DocumentWindow name="DP-24h-範本:2" />
          <DocumentWindow name="DP-24h-範本:3" />
          <DocumentWindow name="DP-24h-範本:1" />
        </Mdi>

        <TabRow>
          {["cp...", "vid...", "cp...", "vid..."].map((n, i) => (
            <Tab key={i}>
              <Icon name="ppt" size={11} />
              <TabName>{n}</TabName>
              <TabButtons>
                {["restore", "max", "x"].map((k) => <DocButton key={k} $w={16} $h={12}><Mark kind={k} /></DocButton>)}
              </TabButtons>
            </Tab>
          ))}
        </TabRow>
        <Bar $plain $h={17}>
          <Strip>
            <Grip $after={3} />
            繪圖(<u>R</u>)
            <Tools items={[["v", 8], ["cursor", 15], ["|", 6]]} />
            快取圖案(<u>U</u>)
            <Tools items={[["v", 9], ["line", 15], ["arrow", 15], ["rect", 15], ["oval", 15, true], ["textbox", 13], ["vtext", 15], ["wordart", 14], ["org", 14], ["clip", 15], ["picture", 15], ["|", 5], ["fill", 13], ["v", 7], ["pen", 14], ["v", 8], ["fontColor", 14], ["v", 7], ["lines", 14], ["dashes", 15], ["arrows", 15], ["shadow", 15], ["cube", 14]]} />
            <Cap before={1} />
          </Strip>
        </Bar>
        <StatusBar>按住並拖曳以插入 一個快取圖案。</StatusBar>
        <Taskbar>
          <Orb />
          {["explorer", "chrome", "notes", "remote", "skype", "outlook", "cmd", "powerpoint", "word", "acrobat"].map((n) => (
            <TaskButton key={n} $on={n === "powerpoint"} $after={n === "powerpoint" ? 3.500 : 1.800}><TaskIcon name={n} /></TaskButton>
          ))}
          <Tray>
            CH
            <svg width="11" height="10"><path d="M0 4h11v6H0z" fill="#c9ccd0" /><path d="M1 6h9M1 8h9" stroke="#555" strokeDasharray="1 1" /><path d="M5 4V1h3" stroke="#ccc" fill="none" /></svg>
            <Icon name="help" size={11} />
            <svg width="8" height="12"><path d="M2.500 1h4v3h-4z" fill="none" stroke="#fff" /><path d="M2 9h4l-2 2z" fill="#fff" /></svg>
            <svg width="11" height="11"><circle cx="5" cy="5" r="4.500" fill="#8bc63e" /><circle cx="8" cy="8" r="3" fill="#c1e276" /></svg>
            <svg width="11" height="11"><path d="M1 1h9v9H1z" fill="#157b28" stroke="#0a4213" /><path d="M3 3h5v5H3z" fill="#2ea940" /></svg>
            <svg width="11" height="11"><path d="M1 1h9v6H1z" fill="#8e9399" /><path d="M1 9h4M7 9h4" stroke="#8e9399" strokeWidth="2" /></svg>
            <svg width="11" height="11"><path d="M1 1l5 3v6l-5-3z" fill="#dfe5ec" /><path d="M5 6l5-3v4l-4 3z" fill="#3c6fc2" /></svg>
            <svg width="11" height="11"><path d="M4 1h7v6H4z" fill="#8fb7df" /><path d="M1 4h6v7H1z" fill="#eef3f8" stroke="#4477b5" /></svg>
            <svg width="11" height="11"><path d="M1 4l6-3 4 4-6 4z" fill="#dfe2e4" /><circle cx="7" cy="8" r="3" fill="#3fae49" /></svg>
            <svg width="11" height="11"><path d="M1 1h9v9H1z" fill="#8fc7e8" /><path d="M2 2l7 7" stroke="#e9d2a8" strokeWidth="3" /></svg>
            <svg width="11" height="11"><path d="M2 1v9M3 2h6v5H3z" fill="#fff" stroke="#ccc" /><circle cx="8" cy="8" r="3" fill="#d6281f" /></svg>
            <svg width="11" height="11"><path d="M1 10V8M4 10V6M7 10V4" stroke="#fff" strokeWidth="1.500" /></svg>
          </Tray>
        </Taskbar>
      </PptWindow>

      <Watermark>
        <MarkBadge>GeekBand</MarkBadge>
        <MarkHan>极客班</MarkHan>
      </Watermark>

      <GraphApp />
    </Page>
  );
}
